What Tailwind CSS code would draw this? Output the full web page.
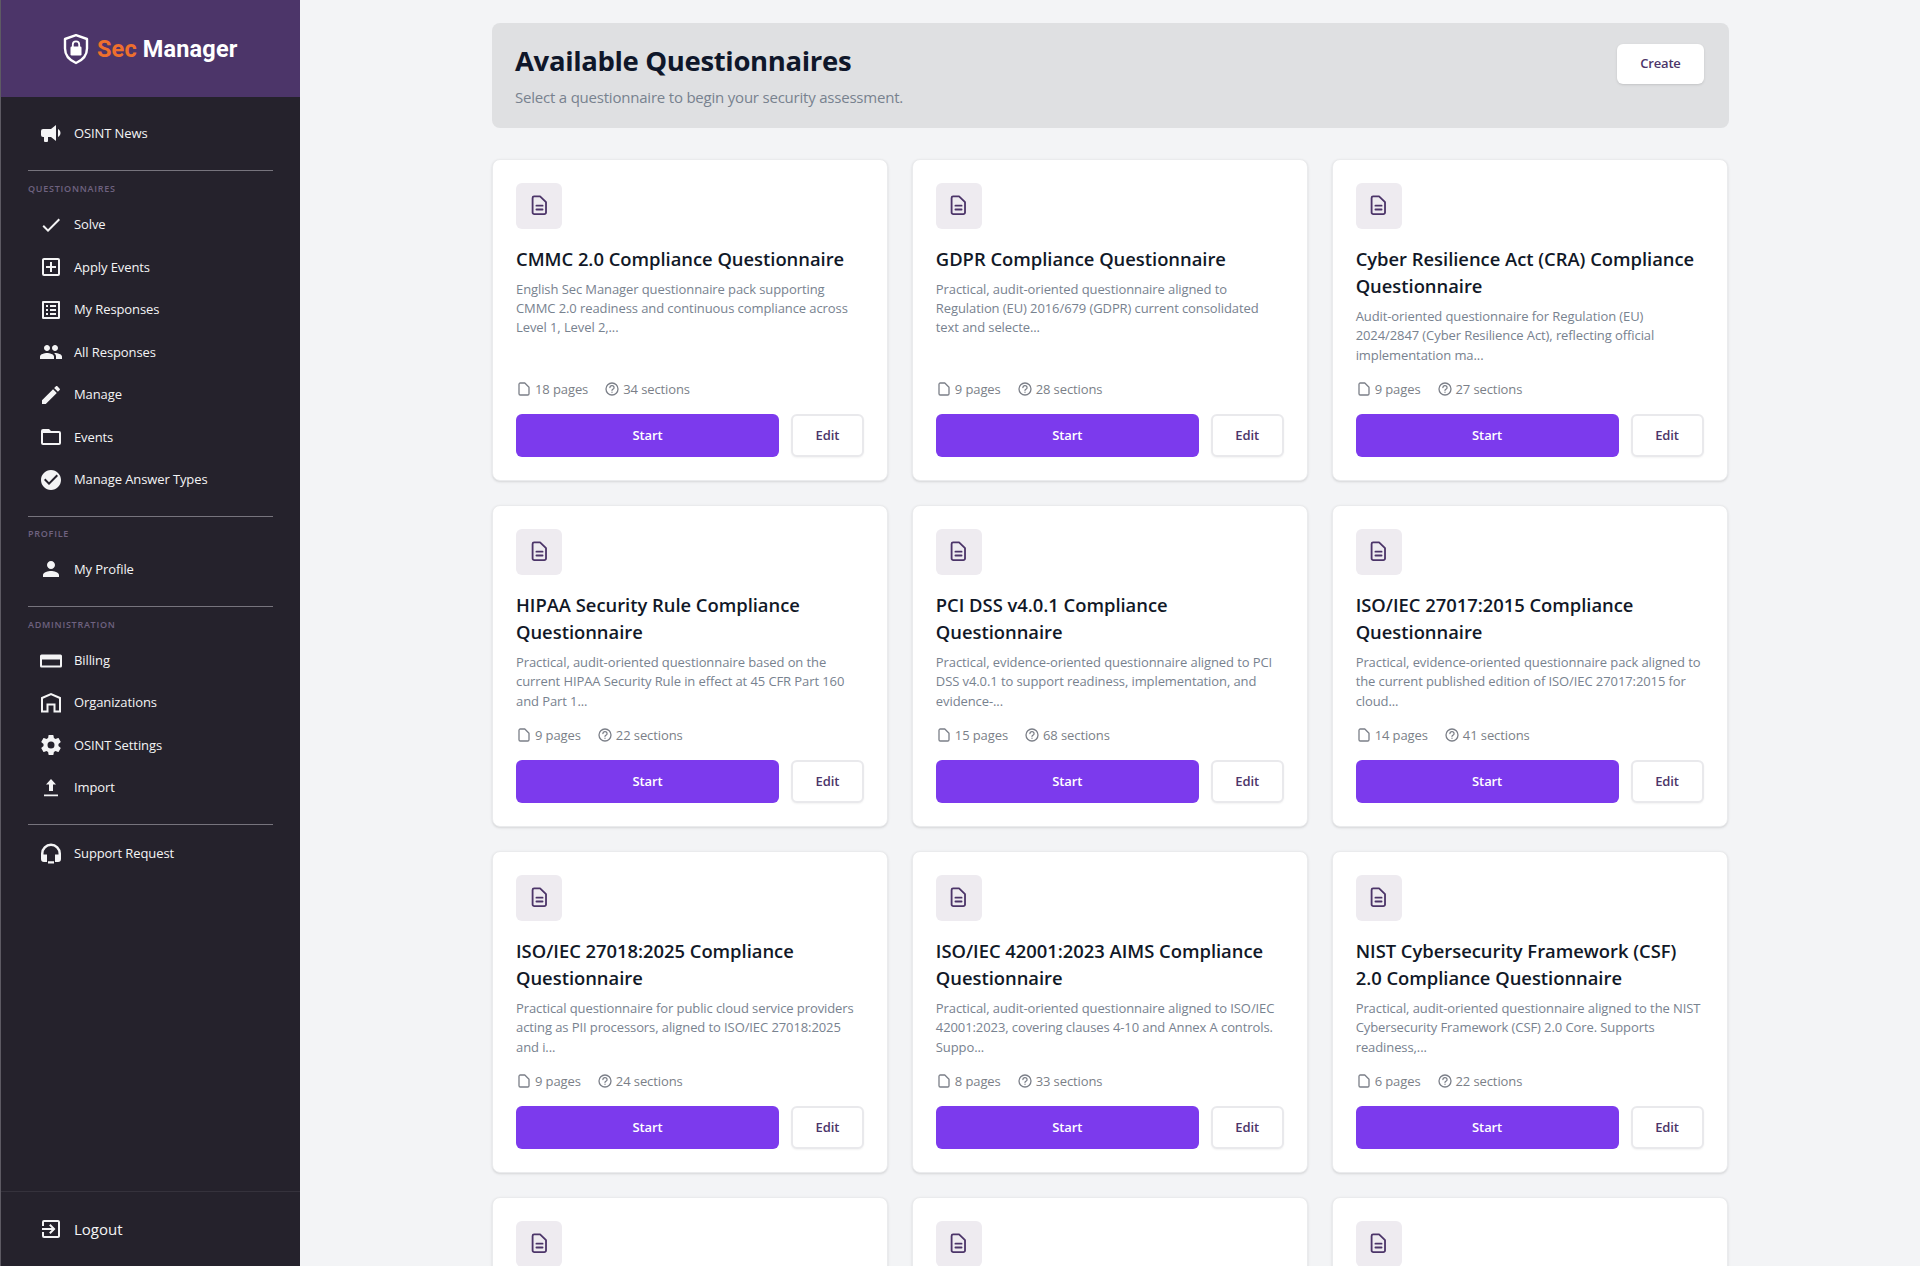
<!DOCTYPE html>
<html lang="en">

<head>
    <meta charset="UTF-8">
    <meta name="viewport" content="width=device-width, initial-scale=1.0">
    <title>Sec Manager</title>
    <script src="https://cdn.jsdelivr.net/npm/@tailwindcss/browser@4"></script>
</head>

<body class="h-[1266px] overflow-hidden bg-[#f3f4f6] font-['Open_Sans','Noto_Sans',sans-serif]">
    <!-- shared icons -->
    <svg class="hidden">
        <symbol id="i-doc" viewBox="0 0 24 24" fill="none" stroke="currentColor" stroke-width="1.9" stroke-linejoin="round" stroke-linecap="round">
            <path d="M6.2 2.500h6.400l6.200 6v10.700a1.800 1.800 0 0 1-1.800 1.800H6.600a1.800 1.800 0 0 1-1.800-1.800V4.100A1.600 1.600 0 0 1 6.400 2.500zM8.800 12.200h6.400M8.800 16.200h6.400" />
        </symbol>
        <symbol id="i-page" viewBox="0 0 16 16" fill="none" stroke="currentColor" stroke-width="1.3" stroke-linejoin="round">
            <path d="M4.300 2h4.500L13 6.200v6.500A1.300 1.300 0 0 1 11.700 14H4.300A1.300 1.300 0 0 1 3 12.700V3.300A1.300 1.300 0 0 1 4.300 2z" />
        </symbol>
        <symbol id="i-help" viewBox="0 0 16 16" fill="none" stroke="currentColor" stroke-width="1.3" stroke-linecap="round">
            <circle cx="8" cy="8" r="6" />
            <path d="M5.900 6.600a2.100 1.900 0 1 1 2.900 1.700q-.8.3-.8 1M8 11.200v.1" />
        </symbol>
    </svg>

    <div class="flex h-full">
        <aside class="flex w-[300px] shrink-0 flex-col border-l border-[#5d5a63] bg-[#25222c] text-[#f4f4f5]">
            <div class="flex h-[97px] shrink-0 items-center bg-[#4c3569] pl-[62px]">
                <svg class="h-[32px] w-[26px]" viewBox="0 0 26 32">
                    <path d="M13 2.200L24 6v9.500c0 7-4.500 11.700-11 14.500C6.500 27.200 2 22.500 2 15.500V6z" fill="none" stroke="#fff" stroke-width="2.400" stroke-linejoin="round" />
                    <rect x="7.500" y="13.500" width="11" height="9" rx="1.200" fill="#fff" />
                    <path d="M9.800 14v-2.500a3.200 3.200 0 0 1 6.400 0V14" fill="none" stroke="#fff" stroke-width="1.800" />
                </svg>
                <p class="ml-[8px] pt-[3px] font-[Roboto] text-[23.5px] font-bold tracking-[0.15px] text-white"><span class="text-[#ee6f2d]">Sec</span> Manager</p>
            </div>

            <nav class="flex grow flex-col px-[27px] pt-[15px] text-[13px] tracking-[-0.1px]">
                <a class="flex h-[42.500px] items-center gap-[11px] pl-[11px]" href="#">
                    <svg class="size-6" viewBox="0 0 24 24" fill="currentColor"><path d="M12 8H4a2 2 0 0 0-2 2v4a2 2 0 0 0 2 2h1v4a1 1 0 0 0 1 1h2a1 1 0 0 0 1-1v-4h3l5 4V4l-5 4m9.500 4c0 1.710-.96 3.260-2.500 4V8c1.530.75 2.500 2.300 2.500 4z" /></svg>
                    <span>OSINT News</span>
                </a>

                <h3 class="mt-[15px] flex h-[34px] items-center border-t border-[#77747d] pt-[3px] text-[9px] font-semibold tracking-[0.75px] text-[#6f6280] uppercase">Questionnaires</h3>
                <a class="flex h-[42.500px] items-center gap-[11px] pl-[11px]" href="#">
                    <svg class="size-6" viewBox="0 0 24 24" fill="currentColor"><path d="M21 7L9 19l-5.500-5.500 1.410-1.410L9 16.170 19.590 5.590 21 7z" /></svg>
                    <span>Solve</span>
                </a>
                <a class="flex h-[42.500px] items-center gap-[11px] pl-[11px]" href="#">
                    <svg class="size-6" viewBox="0 0 24 24" fill="currentColor"><path d="M19 19V5H5v14h14m0-16a2 2 0 0 1 2 2v14a2 2 0 0 1-2 2H5a2 2 0 0 1-2-2V5c0-1.110.9-2 2-2h14m-8 4h2v4h4v2h-4v4h-2v-4H7v-2h4V7z" /></svg>
                    <span>Apply Events</span>
                </a>
                <a class="flex h-[42.500px] items-center gap-[11px] pl-[11px]" href="#">
                    <svg class="size-6" viewBox="0 0 24 24" fill="currentColor"><path d="M19 5v14H5V5h14m1.100-2H3.900c-.5 0-.9.4-.9.9v16.200c0 .4.4.9.9.9h16.200c.4 0 .9-.5.9-.9V3.900c0-.5-.5-.9-.9-.9zM11 7h6v2h-6V7zm0 4h6v2h-6v-2zm0 4h6v2h-6zM7 7h2v2H7zm0 4h2v2H7zm0 4h2v2H7z" /></svg>
                    <span>My Responses</span>
                </a>
                <a class="flex h-[42.500px] items-center gap-[11px] pl-[11px]" href="#">
                    <svg class="size-6" viewBox="0 0 24 24" fill="currentColor"><path d="M16 11c1.660 0 2.990-1.340 2.990-3S17.660 5 16 5c-1.660 0-3 1.340-3 3s1.340 3 3 3zm-8 0c1.660 0 2.990-1.340 2.990-3S9.660 5 8 5C6.340 5 5 6.340 5 8s1.340 3 3 3zm0 2c-2.330 0-7 1.170-7 3.500V19h14v-2.500c0-2.330-4.670-3.500-7-3.500zm8 0c-.29 0-.62.02-.97.05 1.160.84 1.970 1.970 1.970 3.450V19h6v-2.500c0-2.330-4.670-3.500-7-3.500z" /></svg>
                    <span>All Responses</span>
                </a>
                <a class="flex h-[42.500px] items-center gap-[11px] pl-[11px]" href="#">
                    <svg class="size-6" viewBox="0 0 24 24" fill="currentColor"><path d="M3 17.250V21h3.750L17.810 9.940l-3.750-3.750L3 17.250zM20.710 7.040c.39-.39.39-1.020 0-1.410l-2.340-2.340c-.39-.39-1.020-.39-1.410 0l-1.830 1.830 3.750 3.750 1.830-1.830z" /></svg>
                    <span>Manage</span>
                </a>
                <a class="flex h-[42.500px] items-center gap-[11px] pl-[11px]" href="#">
                    <svg class="size-6" viewBox="0 0 24 24" fill="currentColor"><path d="M20 18H4V8h16m0-2h-8l-2-2H4a2 2 0 0 0-2 2v12a2 2 0 0 0 2 2h16a2 2 0 0 0 2-2V8a2 2 0 0 0-2-2z" /></svg>
                    <span>Events</span>
                </a>
                <a class="flex h-[42.500px] items-center gap-[11px] pl-[11px]" href="#">
                    <svg class="size-6" viewBox="0 0 24 24" fill="currentColor"><path d="M12 2C6.480 2 2 6.480 2 12s4.480 10 10 10 10-4.480 10-10S17.520 2 12 2zm-2 15l-5-5 1.410-1.410L10 14.170l7.590-7.590L19 8l-9 9z" /></svg>
                    <span>Manage Answer Types</span>
                </a>

                <h3 class="mt-[15px] flex h-[32px] items-center border-t border-[#77747d] pt-[3px] text-[9px] font-semibold tracking-[0.75px] text-[#6f6280] uppercase">Profile</h3>
                <a class="flex h-[42.500px] items-center gap-[11px] pl-[11px]" href="#">
                    <svg class="size-6" viewBox="0 0 24 24" fill="currentColor"><path d="M12 12c2.210 0 4-1.790 4-4s-1.790-4-4-4-4 1.790-4 4 1.790 4 4 4zm0 2c-2.670 0-8 1.340-8 4v2h16v-2c0-2.660-5.330-4-8-4z" /></svg>
                    <span>My Profile</span>
                </a>

                <h3 class="mt-[15px] flex h-[33.500px] items-center border-t border-[#77747d] pt-[3px] text-[9px] font-semibold tracking-[0.75px] text-[#6f6280] uppercase">Administration</h3>
                <a class="flex h-[42.500px] items-center gap-[11px] pl-[11px]" href="#">
                    <svg class="size-6" viewBox="0 0 24 24" fill="currentColor"><path fill-rule="evenodd" d="M2.500 6.500h19A1.500 1.500 0 0 1 23 8v10a1.500 1.500 0 0 1-1.500 1.500h-19A1.500 1.500 0 0 1 1 18V8a1.500 1.500 0 0 1 1.500-1.500zM3 11.500v6h18v-6z" /></svg>
                    <span>Billing</span>
                </a>
                <a class="flex h-[42.500px] items-center gap-[11px] pl-[11px]" href="#">
                    <svg class="size-6" viewBox="0 0 24 24" fill="none" stroke="currentColor" stroke-width="2"><path d="M3 20.500V7l9-4 9 4v13.500h-5.500v-7h-7v7z" /></svg>
                    <span>Organizations</span>
                </a>
                <a class="flex h-[42.500px] items-center gap-[11px] pl-[11px]" href="#">
                    <svg class="size-6" viewBox="0 0 24 24" fill="currentColor"><path d="M12 15.500A3.500 3.500 0 0 1 8.500 12 3.500 3.500 0 0 1 12 8.500a3.500 3.500 0 0 1 3.500 3.500 3.500 3.500 0 0 1-3.500 3.500m7.430-2.530c.04-.32.07-.64.07-.97s-.03-.66-.07-1l2.110-1.630c.19-.15.24-.42.12-.64l-2-3.460c-.12-.22-.39-.31-.61-.22l-2.490 1c-.52-.39-1.060-.73-1.690-.98l-.37-2.650A.506.506 0 0 0 14 2h-4c-.25 0-.46.18-.5.42l-.37 2.650c-.63.25-1.170.59-1.690.98l-2.490-1c-.22-.09-.49 0-.61.22l-2 3.460c-.13.22-.07.49.12.64L4.570 11c-.04.34-.07.67-.07 1s.03.65.07.97l-2.110 1.660c-.19.15-.25.42-.12.64l2 3.460c.12.22.39.3.61.22l2.490-1.010c.52.4 1.060.74 1.690.99l.37 2.650c.04.24.25.42.5.42h4c.25 0 .46-.18.5-.42l.37-2.650c.63-.26 1.170-.59 1.690-.99l2.490 1.010c.22.08.49 0 .61-.22l2-3.460c.12-.22.07-.49-.12-.64z" /></svg>
                    <span>OSINT Settings</span>
                </a>
                <a class="flex h-[42.500px] items-center gap-[11px] pl-[11px]" href="#">
                    <svg class="size-6" viewBox="0 0 24 24" fill="currentColor"><path d="M12 3l5 5.500h-3V15h-4V8.500H7zM5 18.500h14v1.800H5z" /></svg>
                    <span>Import</span>
                </a>

                <div class="mt-[14.500px] border-t border-[#77747d] pt-[8px]">
                    <a class="flex h-[42.500px] items-center gap-[11px] pl-[11px]" href="#">
                        <svg class="size-6" viewBox="0 0 24 24" fill="currentColor"><path d="M12 1.500a10 10 0 0 0-10 10V17a3 3 0 0 0 3 3h3v-7.500H4.500v-1a7.500 7.500 0 0 1 15 0v1H16V20h3a3 3 0 0 0 3-3v-5.500a10 10 0 0 0-10-10zM9 19.200h6V21.500H9z" /></svg>
                        <span>Support Request</span>
                    </a>
                </div>
            </nav>

            <div class="flex h-[75px] shrink-0 items-center gap-[11px] border-t border-[#35323c] pl-[38px] text-[15px]">
                <svg class="size-6" viewBox="0 0 24 24" fill="currentColor"><path d="M10.090 15.590L11.500 17l5-5-5-5-1.410 1.410L12.670 11H3v2h9.670l-2.580 2.590zM19 3H5a2 2 0 0 0-2 2v4h2V5h14v14H5v-4H3v4a2 2 0 0 0 2 2h14c1.100 0 2-.9 2-2V5a2 2 0 0 0-2-2z" /></svg>
                <span>Logout</span>
            </div>
        </aside>

        <main class="grow overflow-hidden pt-[23px] pl-[192px]">
            <header class="flex h-[105px] w-[1237px] items-start justify-between rounded-lg bg-[#dfe0e2] pr-[25px] pl-[23px]">
                <div class="pt-[17px]">
                    <h1 class="text-[27.5px] leading-[42px] font-bold tracking-[-0.35px] text-[#0f172a]">Available Questionnaires</h1>
                    <p class="text-[15px] leading-[30px] tracking-[-0.21px] text-[#78828f]">Select a questionnaire to begin your security assessment.</p>
                </div>
                <button class="mt-[21px] h-[40px] w-[87px] rounded-md bg-white text-[13px] font-semibold tracking-[-0.2px] text-[#4c3569] shadow-sm">Create</button>
            </header>

            <section id="cards" class="mt-[30.5px] grid w-[1235.5px] grid-cols-3 gap-6"></section>
        </main>
    </div>

    <script>
        var cards = [
            ["CMMC 2.0 Compliance Questionnaire", "English Sec Manager questionnaire pack supporting<br>CMMC 2.0 readiness and continuous compliance across<br>Level 1, Level 2,...", 18, 34],
            ["GDPR Compliance Questionnaire", "Practical, audit-oriented questionnaire aligned to<br>Regulation (EU) 2016/679 (GDPR) current consolidated<br>text and selecte...", 9, 28],
            ["Cyber Resilience Act (CRA) Compliance<br>Questionnaire", "Audit-oriented questionnaire for Regulation (EU)<br>2024/2847 (Cyber Resilience Act), reflecting official<br>implementation ma...", 9, 27],
            ["HIPAA Security Rule Compliance<br>Questionnaire", "Practical, audit-oriented questionnaire based on the<br>current HIPAA Security Rule in effect at 45 CFR Part 160<br>and Part 1...", 9, 22],
            ["PCI DSS v4.0.1 Compliance<br>Questionnaire", "Practical, evidence-oriented questionnaire aligned to PCI<br>DSS v4.0.1 to support readiness, implementation, and<br>evidence-...", 15, 68],
            ["ISO/IEC 27017:2015 Compliance<br>Questionnaire", "Practical, evidence-oriented questionnaire pack aligned to<br>the current published edition of ISO/IEC 27017:2015 for<br>cloud...", 14, 41],
            ["ISO/IEC 27018:2025 Compliance<br>Questionnaire", "Practical questionnaire for public cloud service providers<br>acting as PII processors, aligned to ISO/IEC 27018:2025<br>and i...", 9, 24],
            ["ISO/IEC 42001:2023 AIMS Compliance<br>Questionnaire", "Practical, audit-oriented questionnaire aligned to ISO/IEC<br>42001:2023, covering clauses 4-10 and Annex A controls.<br>Suppo...", 8, 33],
            ["NIST Cybersecurity Framework (CSF)<br>2.0 Compliance Questionnaire", "Practical, audit-oriented questionnaire aligned to the NIST<br>Cybersecurity Framework (CSF) 2.0 Core. Supports<br>readiness,...", 6, 22],
            null, null, null
        ];

        document.getElementById("cards").innerHTML = cards.map(function (c) {
            var body = "";
            if (c) {
                body = `
                    <h2 class="mt-[16px] text-[18.4px] leading-[27.300px] font-semibold tracking-[-0.02px] whitespace-nowrap text-[#111827]">${c[0]}</h2>
                    <p class="mt-[8px] text-[13px] leading-[19.300px] tracking-[-0.09px] whitespace-nowrap text-[#78828f]">${c[1]}</p>
                    <div class="mt-auto flex items-center text-[13px] leading-5 tracking-[-0.1px] text-[#7b7f88]">
                        <svg class="size-4"><use href="#i-page" /></svg>
                        <span class="ml-[3px]">${c[2]} pages</span>
                        <svg class="ml-[16px] size-4"><use href="#i-help" /></svg>
                        <span class="ml-[3px]">${c[3]} sections</span>
                    </div>
                    <div class="mt-[15.5px] flex gap-3 text-[13px] font-semibold tracking-[-0.1px]">
                        <button class="h-[43px] w-[263px] rounded-md bg-[#7c3aed] pt-px text-white">Start</button>
                        <button class="h-[43px] w-[73px] rounded-md border-2 border-[#e9e9ec] bg-white pt-px text-[#4c3569] shadow-xs">Edit</button>
                    </div>`;
            }
            return `
                <article class="flex h-[322px] flex-col rounded-lg border border-[#eaebed] bg-white px-[23px] pt-[23px] pb-[22.5px] shadow-sm">
                    <div class="flex size-[46px] shrink-0 items-center justify-center rounded-md bg-[#eeebf0] text-[#4c3569]">
                        <svg class="size-[23px]"><use href="#i-doc" /></svg>
                    </div>${body}
                </article>`;
        }).join("");
    </script>
</body>

</html>
